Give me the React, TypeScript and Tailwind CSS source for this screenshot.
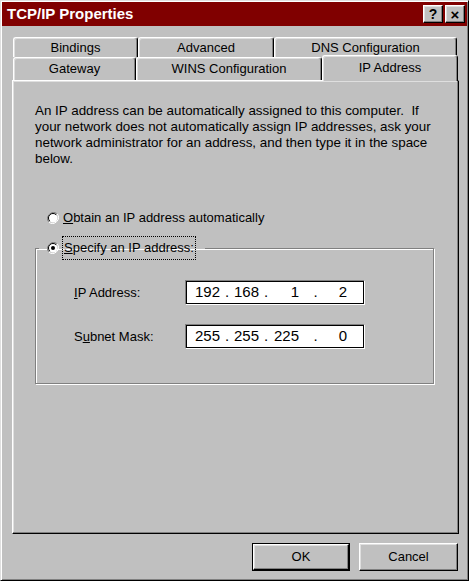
import React from 'react';

const raised =
  'border border-t-white border-l-white border-r-black border-b-black shadow-[inset_-1px_-1px_0_#808080,inset_1px_1px_0_#dfdfdf]';

const Tab: React.FC<{label: string; w: string; active?: boolean}> = ({label, w, active}) => (
  <div
    className={
      active
        ? `${w} relative z-10 -mt-[2px] h-[26px] -mb-[1px] flex items-start justify-center rounded-t-[3px] border-t border-l border-r border-t-white border-l-white border-r-black bg-[#c0c0c0] pt-[2px] shadow-[inset_-1px_0_0_#808080,inset_1px_1px_0_#dfdfdf]`
        : `${w} flex items-center justify-center rounded-t-[3px] border-t border-l border-r border-t-white border-l-white border-r-black shadow-[inset_-1px_0_0_#808080,inset_1px_1px_0_#dfdfdf]`
    }>
    {label}
  </div>
);

const Radio: React.FC<{checked?: boolean}> = ({checked}) => (
  <svg width="12" height="12" viewBox="0 0 12 12" className="shrink-0">
    <path d="M10.2 1.8 A6 6 0 0 0 1.8 10.2" fill="none" stroke="#808080" strokeWidth="1" />
    <path d="M1.8 10.2 A6 6 0 0 0 10.2 1.8" fill="none" stroke="#ffffff" strokeWidth="1" />
    <circle cx="6" cy="6" r="4.5" fill="#ffffff" />
    <path d="M9.2 2.8 A4.5 4.5 0 0 0 2.8 9.2" fill="none" stroke="#000000" strokeWidth="1" />
    {checked && <circle cx="6" cy="6" r="2" fill="#000000" />}
  </svg>
);

const IpField: React.FC<{parts: string[]}> = ({parts}) => (
  <div className="flex h-[25px] w-[180px] items-center border border-t-[#808080] border-l-[#808080] border-r-white border-b-white bg-white pl-[4px] text-[15px] shadow-[inset_1px_1px_0_#000,inset_-1px_-1px_0_#000]">
    <span className="w-[30px] text-right">{parts[0]}</span>
    <span className="w-[14px] text-center">.</span>
    <span className="w-[24px] text-right">{parts[1]}</span>
    <span className="w-[16px] text-center">.</span>
    <span className="w-[25px] text-right">{parts[2]}</span>
    <span className="w-[33px] text-center">.</span>
    <span className="w-[15px] text-right">{parts[3]}</span>
  </div>
);

export default function App() {
  return (
    <div className="h-[581px] w-[469px] overflow-hidden border border-t-[#dfdfdf] border-l-[#dfdfdf] border-r-black border-b-black bg-[#c0c0c0] p-[1px] font-['Liberation_Sans',Arial,sans-serif] text-[13px] text-black shadow-[inset_1px_1px_0_white,inset_-1px_-1px_0_#808080]">
      {/* title bar */}
      <div className="flex h-[24px] items-center justify-between bg-[#800000] pl-[5px] pr-[2px]">
        <span className="text-[15px] font-bold text-white">TCP/IP Properties</span>
        <div className="flex items-center gap-[2px]">
          <div className={`${raised} flex h-[18px] w-[20px] items-center justify-center bg-[#c0c0c0] text-[14px] font-bold leading-none`}>?</div>
          <div className={`${raised} flex h-[18px] w-[20px] items-center justify-center bg-[#c0c0c0] text-[15px] font-bold leading-none`}>×</div>
        </div>
      </div>

      <div className="pl-[10px] pr-[8px] pt-[11px]">
        {/* tabs */}
        <div className="ml-[1px] flex h-[20px]">
          <Tab label="Bindings" w="w-[125px]" />
          <Tab label="Advanced" w="w-[136px]" />
          <Tab label="DNS Configuration" w="w-[183px]" />
        </div>
        <div className="ml-[1px] flex h-[23px]">
          <Tab label="Gateway" w="w-[123px]" />
          <Tab label="WINS Configuration" w="w-[186px]" />
          <Tab label="IP Address" w="w-[136px]" active />
        </div>

        {/* panel */}
        <div className="h-[454px] border border-t-white border-l-white border-r-black border-b-black pl-[22px] pt-[22px] shadow-[inset_-1px_-1px_0_#808080,inset_1px_1px_0_#dfdfdf]">
          <p className="text-[13.4px] leading-[16px]">
            An IP address can be automatically assigned to this computer.&nbsp; If
            <br />
            your network does not automatically assign IP addresses, ask your
            <br />
            network administrator for an address, and then type it in the space
            <br />
            below.
          </p>

          <div className="ml-[12px] mt-[43px] flex h-[16px] items-center gap-[4px]">
            <Radio />
            <span>
              <u>O</u>btain an IP address automatically
            </span>
          </div>

          <fieldset className="mt-[10px] h-[148px] w-[399px] border border-[#808080] px-0 pt-[20px] shadow-[1px_1px_0_white,inset_1px_1px_0_white]">
            <legend className="ml-[3px] flex h-[24px] items-center gap-[3px] pl-[8px] pr-[9px]">
              <Radio checked />
              <span className="border border-dotted border-black px-[1px] py-[4px] leading-[14px]">
                <u>S</u>pecify an IP address:
              </span>
            </legend>
            <div className="flex items-center pl-[38px]">
              <span className="w-[111px]">
                <u>I</u>P Address:
              </span>
              <IpField parts={['192', '168', '1', '2']} />
            </div>
            <div className="mt-[19px] flex items-center pl-[38px]">
              <span className="w-[111px]">
                S<u>u</u>bnet Mask:
              </span>
              <IpField parts={['255', '255', '225', '0']} />
            </div>
          </fieldset>
        </div>

        {/* buttons */}
        <div className="mt-[9px] flex justify-end gap-[9px] pr-[1px]">
          <button className="h-[28px] w-[98px] border border-black bg-[#c0c0c0] p-0">
            <div className={`${raised} flex h-full w-full items-center justify-center`}>OK</div>
          </button>
          <button className={`${raised} h-[28px] w-[99px] bg-[#c0c0c0]`}>Cancel</button>
        </div>
      </div>
    </div>
  );
}
